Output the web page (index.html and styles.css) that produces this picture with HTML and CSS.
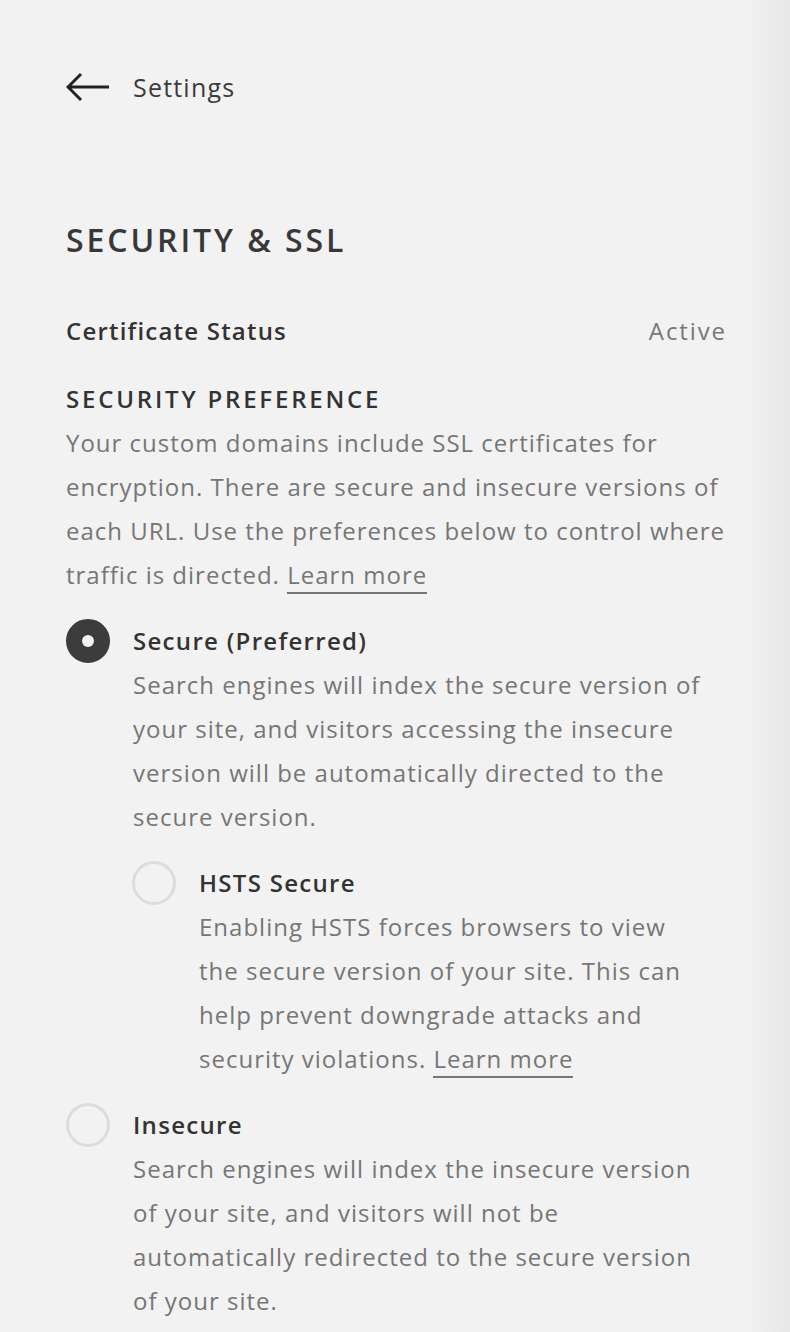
FILE: index.html
```html
<!DOCTYPE html>
<html lang="en">
<head>
<meta charset="utf-8">
<title>Security &amp; SSL</title>
<link rel="stylesheet" href="styles.css">
</head>
<body>
<div class="page">
  <header class="topbar">
    <svg class="back-icon" width="44" height="30" viewBox="0 0 44 30" aria-hidden="true">
      <path d="M2 15 H43 M15 2 L2 15 L15 28" fill="none" stroke="#222" stroke-width="3" stroke-linecap="butt" stroke-linejoin="miter"/>
    </svg>
    <span class="back-label">Settings</span>
  </header>

  <h1 class="page-title">SECURITY &amp; SSL</h1>

  <div class="status-row">
    <span class="status-label">Certificate Status</span>
    <span class="status-value">Active</span>
  </div>

  <h2 class="section-title">SECURITY PREFERENCE</h2>
  <p class="section-text">Your custom domains include SSL certificates for<br>encryption. There are secure and insecure versions of<br>each URL. Use the preferences below to control where<br>traffic is directed. <a class="link" href="#">Learn more</a></p>

  <div class="option">
    <span class="radio radio-on"></span>
    <div class="option-body">
      <div class="option-title">Secure (Preferred)</div>
      <p class="option-text">Search engines will index the secure version of<br>your site, and visitors accessing the insecure<br>version will be automatically directed to the<br>secure version.</p>

      <div class="option">
        <span class="radio"></span>
        <div class="option-body">
          <div class="option-title">HSTS Secure</div>
          <p class="option-text">Enabling HSTS forces browsers to view<br>the secure version of your site. This can<br>help prevent downgrade attacks and<br>security violations. <a class="link" href="#">Learn more</a></p>
        </div>
      </div>
    </div>
  </div>

  <div class="option">
    <span class="radio"></span>
    <div class="option-body">
      <div class="option-title">Insecure</div>
      <p class="option-text">Search engines will index the insecure version<br>of your site, and visitors will not be<br>automatically redirected to the secure version<br>of your site.</p>
    </div>
  </div>
</div>
</body>
</html>
```

FILE: styles.css
```css
html, body {
  margin: 0;
  padding: 0;
}
body {
  min-height: 1332px;
  background: linear-gradient(to left, #e7e7e7 0px, #f2f2f2 46px);
  font-family: "Open Sans", "Liberation Sans", sans-serif;
  color: #3b3b3b;
}
.page {
  width: 659px;
  padding: 65px 0 0 66px;
}
.topbar {
  display: flex;
  align-items: center;
  gap: 23px;
  height: 44px;
}
.back-icon {
  display: block;
  flex: none;
}
.back-label {
  font-size: 25px;
  letter-spacing: 1.2px;
  color: #3b3b3b;
}
.page-title {
  margin: 109px 0 0;
  font-size: 32px;
  line-height: 44px;
  font-weight: 600;
  color: #383838;
  letter-spacing: 2.9px;
}
.status-row {
  display: flex;
  justify-content: space-between;
  margin-top: 47px;
  line-height: 44px;
  font-size: 24px;
}
.status-label {
  font-weight: 600;
  color: #333;
  letter-spacing: 1.2px;
}
.status-value {
  color: #777;
  letter-spacing: 1.9px;
  margin-right: -2px;
}
.section-title {
  margin: 24px 0 0;
  font-size: 24px;
  line-height: 44px;
  font-weight: 600;
  color: #333;
  letter-spacing: 2.8px;
}
.section-text,
.option-text {
  margin: 0;
  font-size: 24px;
  line-height: 44px;
  color: #767676;
  letter-spacing: 1px;
}
.link {
  color: inherit;
  text-decoration: none;
  border-bottom: 2px solid #767676;
  padding-bottom: 1px;
}
.option {
  display: flex;
  gap: 23px;
  margin-top: 22px;
}
.radio {
  flex: none;
  box-sizing: border-box;
  width: 44px;
  height: 44px;
  border-radius: 50%;
  border: 3px solid #dcdcdc;
  display: flex;
  align-items: center;
  justify-content: center;
}
.radio-on {
  background: #3c3c3c;
  border-color: #3c3c3c;
}
.radio-on::after {
  content: "";
  width: 12px;
  height: 12px;
  border-radius: 50%;
  background: #f2f2f2;
}
.option-body {
  flex: 1;
  min-width: 0;
}
.option-title {
  font-size: 24px;
  line-height: 44px;
  font-weight: 600;
  color: #333;
  letter-spacing: 1.3px;
}
.option .option .radio {
  margin-left: -1px;
}
```
